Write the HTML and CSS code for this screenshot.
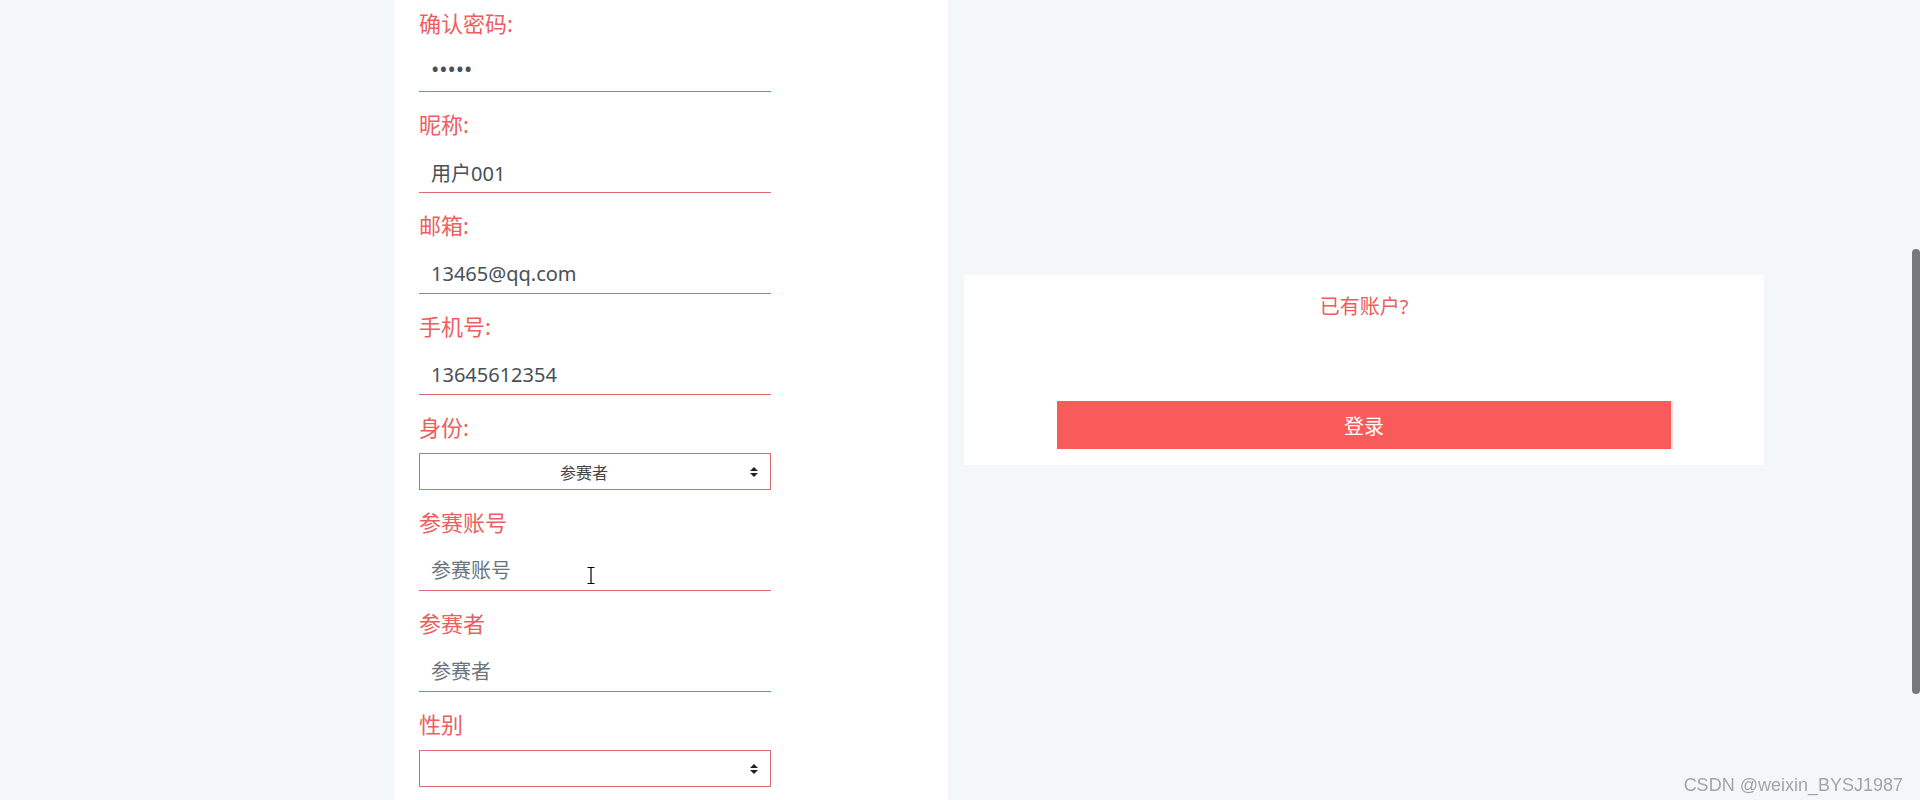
FILE: index.html
```html
<!DOCTYPE html>
<html>
<head>
<meta charset="utf-8"/>
<title>注册</title>
<link rel="stylesheet" href="styles.css">
</head>
<body>
<main class="page">
<div class="register">
	<form class="reg-form">
		<div class="field">
			<label class="field-label">确认密码:</label>
			<input class="line-input" type="password" value="12345"/>
		</div>
		<div class="field">
			<label class="field-label">昵称:</label>
			<input class="line-input" type="text" value="用户001"/>
		</div>
		<div class="field">
			<label class="field-label">邮箱:</label>
			<input class="line-input" type="text" value="13465@qq.com"/>
		</div>
		<div class="field">
			<label class="field-label">手机号:</label>
			<input class="line-input" type="text" value="13645612354"/>
		</div>
		<div class="field">
			<label class="field-label">身份:</label>
			<div class="select-wrap">
				<select class="box-select">
					<option>参赛者</option>
				</select>
				<svg class="caret" width="8" height="10" viewBox="0 0 8 10"><path d="M0 4 L4 0 L8 4 Z M0 6 L4 10 L8 6 Z"/></svg>
			</div>
		</div>
		<div class="field">
			<label class="field-label">参赛账号</label>
			<input class="line-input" type="text" placeholder="参赛账号"/>
		</div>
		<div class="field">
			<label class="field-label">参赛者</label>
			<input class="line-input" type="text" placeholder="参赛者"/>
		</div>
		<div class="field">
			<label class="field-label">性别</label>
			<div class="select-wrap">
				<select class="box-select">
					<option></option>
				</select>
				<svg class="caret" width="8" height="10" viewBox="0 0 8 10"><path d="M0 4 L4 0 L8 4 Z M0 6 L4 10 L8 6 Z"/></svg>
			</div>
		</div>
	</form>
</div>
<div class="side">
	<div class="login-box">
		<p class="login-hint">已有账户?</p>
		<button class="login-btn" type="button">登录</button>
	</div>
</div>
</main>
<!-- mouse pointer and browser scrollbar from the screenshot -->
<svg class="ibeam" width="8" height="17" viewBox="0 0 8 17"><path d="M0.5 0.5 H7.5 M4 0.5 V16.5 M0.5 16.5 H7.5" stroke="#000" stroke-width="1.2" fill="none"/></svg>
<div class="scroll-thumb"></div>
<div class="watermark">CSDN @weixin_BYSJ1987</div>
</body>
</html>
```

FILE: styles.css
```css
html, body {
	margin: 0;
	height: 800px;
	overflow: hidden;
}
body {
	font-family: "Noto Sans", "Noto Sans CJK SC", sans-serif;
	background-color: #f4f7f8;
}
.page {
	display: flex;
	gap: 16px;
	padding-left: 394px;
	height: 800px;
}
.register {
	width: 554px;
	box-sizing: border-box;
	background-color: #fff;
	padding: 12px 25px 0;
}
.reg-form {
	width: 352px;
}
.field {
	margin-bottom: 20px;
}
.field:first-child {
	margin-top: -1px;
}
.field-label {
	display: block;
	font-size: 22px;
	line-height: 25px;
	padding-bottom: 5px;
	color: #ec5e60;
}
.line-input {
	display: block;
	width: 100%;
	box-sizing: border-box;
	height: 40px;
	margin-top: 11px;
	padding: 0 12px;
	border: none;
	border-bottom: 1px solid #dc6a6c;
	outline: none;
	background: transparent;
	font-family: "Noto Sans", "Noto Sans CJK SC", sans-serif;
	font-size: 20px;
	color: #495057;
}
.line-input[type="password"] {
	font-size: 22px;
	padding-bottom: 7px;
}
.line-input::placeholder {
	color: #6c757d;
}
.select-wrap {
	position: relative;
	margin-top: 8px;
}
.box-select {
	display: block;
	width: 100%;
	height: 37px;
	box-sizing: border-box;
	border: 1px solid #dc6a6c;
	border-radius: 0;
	background: #fff;
	appearance: none;
	-webkit-appearance: none;
	padding: 0 22px 0 0;
	text-align: center;
	text-align-last: center;
	font-family: "Noto Sans CJK SC", sans-serif;
	font-size: 16px;
	font-weight: 400;
	color: #444;
	outline: none;
}
.caret {
	position: absolute;
	right: 13px;
	top: 14px;
	fill: #222;
	pointer-events: none;
}
.side {
	flex: none;
}
.login-box {
	width: 800px;
	height: 190px;
	box-sizing: border-box;
	margin-top: 275px;
	background-color: #fff;
	padding-top: 18px;
	text-align: center;
}
.login-hint {
	margin: 0;
	font-size: 20px;
	line-height: 28px;
	color: #ef5b5d;
}
.login-btn {
	display: block;
	width: 616px;
	height: 48px;
	margin: 80px 0 0 93px;
	border: none;
	border-right: 2px solid #fbe3e3;
	background-color: #f95a5a;
	color: #fff;
	font-family: "Noto Sans CJK SC", sans-serif;
	font-size: 20px;
}
.ibeam {
	position: absolute;
	left: 587px;
	top: 567px;
}
.scroll-thumb {
	position: fixed;
	right: 0;
	top: 249px;
	width: 8px;
	height: 445px;
	border-radius: 4px;
	background-color: #787878;
}
.watermark {
	position: fixed;
	right: 17px;
	bottom: 4px;
	font-family: "Liberation Sans", Arial, sans-serif;
	font-size: 18px;
	color: #a3a3a3;
	text-shadow: 0 0 1px #fff;
}
```
